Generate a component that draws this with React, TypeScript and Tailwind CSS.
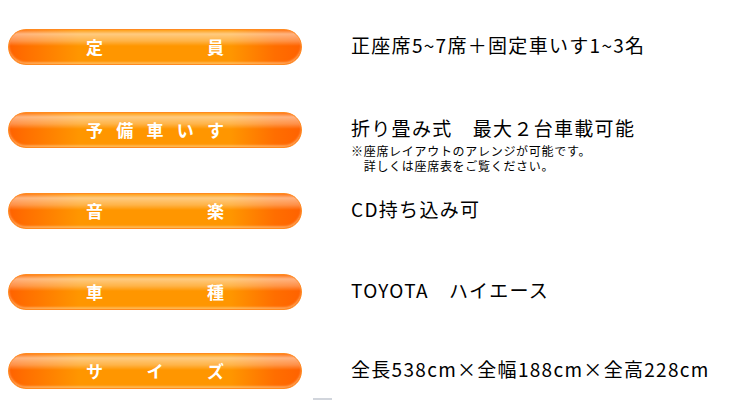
import React from "react";

type Row = {
  label: string[];
  text: string;
  note?: string[];
  h: string;
};

const rows: Row[] = [
  { label: ["定", "員"], text: "正座席5~7席＋固定車いす1~3名", h: "h-[83px]" },
  {
    label: ["予", "備", "車", "い", "す"],
    text: "折り畳み式　最大２台車載可能",
    note: ["※座席レイアウトのアレンジが可能です。", "　詳しくは座席表をご覧ください。"],
    h: "h-[81px]",
  },
  { label: ["音", "楽"], text: "CD持ち込み可", h: "h-[81px]" },
  { label: ["車", "種"], text: "TOYOTA　ハイエース", h: "h-[79px]" },
  { label: ["サ", "イ", "ズ"], text: "全長538cm×全幅188cm×全高228cm", h: "h-[45px]" },
];

/* orange glossy pill */
function Pill({ label }: { label: string[] }) {
  return (
    <div
      className="w-[294px] h-[36px] shrink-0 rounded-full border border-[#ff8a20]
                 bg-[linear-gradient(to_bottom,rgba(255,255,255,0.1)_0px,rgba(255,255,255,0.5)_4px,rgba(255,255,255,0.28)_11px,rgba(255,255,255,0)_16px),linear-gradient(to_right,#ff6200,#ff6e00_5%,#ff9600_24%,#ff9600_76%,#ff6e00_91%,#ff6200)]
                 shadow-[inset_0_-2px_2px_rgba(255,215,160,0.5)] flex items-center justify-center"
    >
      <div className="w-[138px] flex justify-between text-white font-bold text-[17px] leading-none pb-[2px]">
        {label.map((c, i) => (
          <span key={i}>{c}</span>
        ))}
      </div>
    </div>
  );
}

export default function App() {
  return (
    <div
      className="w-[729px] h-[400px] overflow-hidden bg-white text-black pt-[29px] pl-[8px]"
      style={{ fontFamily: '"Noto Sans CJK JP", sans-serif' }}
    >
      {rows.map((r, i) => (
        <div key={i} className={`flex items-start ${r.h}`}>
          <Pill label={r.label} />
          <div className="ml-[49px]">
            <p className="text-[19px] leading-[30px] mt-[1px] tracking-[1.3px] whitespace-nowrap">{r.text}</p>
            {r.note && (
              <div className="text-[12px] leading-[15px] tracking-[0.7px] whitespace-nowrap">
                {r.note.map((n, j) => (
                  <p key={j}>{n}</p>
                ))}
              </div>
            )}
          </div>
        </div>
      ))}
      <div className="ml-[305px] w-[19px] h-[2px] bg-gray-300" />
    </div>
  );
}
